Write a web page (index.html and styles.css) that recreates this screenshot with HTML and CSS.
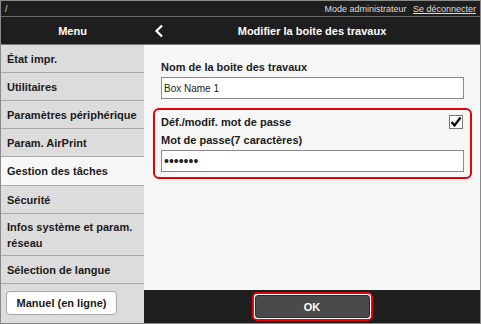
FILE: index.html
```html
<!DOCTYPE html>
<html lang="fr">
<head>
  <meta charset="UTF-8" />
  <title>Modifier la boîte des travaux</title>
  <link rel="stylesheet" href="styles.css">
</head>
<body>
  <div class="page">
    <div class="topbar">
      <span class="path">/</span>
      <span class="admin">Mode administrateur <a href="#" class="logout">Se déconnecter</a></span>
    </div>

    <div class="header">
      <div class="header-menu">Menu</div>
      <div class="header-title">
        <span class="back">
          <svg width="10" height="14" viewBox="0 0 10 14"><path d="M8 1.5 L2.5 7 L8 12.5" fill="none" stroke="#fff" stroke-width="2.2"/></svg>
        </span>
        <span>Modifier la boite des travaux</span>
      </div>
    </div>

    <div class="main">
      <!-- Side menu -->
      <div class="sidebar">
        <div class="menu-item">État impr.</div>
        <div class="menu-item">Utilitaires</div>
        <div class="menu-item">Paramètres périphérique</div>
        <div class="menu-item">Param. AirPrint</div>
        <div class="menu-item active">Gestion des tâches</div>
        <div class="menu-item">Sécurité</div>
        <div class="menu-item tall">Infos système et param. réseau</div>
        <div class="menu-item">Sélection de langue</div>
        <div class="manual-wrap">
          <button class="manual-btn">Manuel (en ligne)</button>
        </div>
      </div>

      <!-- Form -->
      <div class="content">
        <div class="form">
          <div class="field">
            <div class="label">Nom de la boite des travaux</div>
            <div class="input">Box Name 1</div>
          </div>
          <div class="password-box">
            <div class="check-row">
              <span class="label">Déf./modif. mot de passe</span>
              <span class="checkbox">
                <svg width="12" height="12" viewBox="0 0 12 12"><path d="M1.5 6 L4.5 9.5 L10.5 1.5" fill="none" stroke="#000" stroke-width="2.2"/></svg>
              </span>
            </div>
            <div class="label">Mot de passe(7 caractères)</div>
            <div class="input dots">•••••••</div>
          </div>
        </div>
        <div class="footer">
          <div class="ok-ring"><button class="ok-btn">OK</button></div>
        </div>
      </div>
    </div>
  </div>
</body>
</html>
```

FILE: styles.css
```css
* {
  margin: 0;
  padding: 0;
  box-sizing: border-box;
}

body {
  font-family: "Liberation Sans", Arial, sans-serif;
  background: #fff;
}

.page {
  width: 481px;
  height: 324px;
  border: 1px solid #8a8a8a;
  display: flex;
  flex-direction: column;
  overflow: hidden;
}

/* Top bar */
.topbar {
  height: 15px;
  background: #1e1e1e;
  color: #ddd;
  font-size: 9px;
  display: flex;
  justify-content: space-between;
  align-items: center;
  padding: 0 4px 0 4px;
}

.logout {
  color: #ddd;
  margin-left: 4px;
}

/* Header */
.header {
  height: 29px;
  background: #1e1e1e;
  border-top: 1px solid #6a6a6a;
  border-bottom: 1px solid #777;
  display: flex;
  color: #fff;
  font-weight: bold;
  font-size: 11px;
}

.header-menu {
  width: 143px;
  display: flex;
  align-items: center;
  justify-content: center;
}

.header-title {
  flex: 1;
  position: relative;
  display: flex;
  align-items: center;
  justify-content: center;
}

.back {
  position: absolute;
  left: 10px;
  top: 7px;
}

/* Main area */
.main {
  flex: 1;
  display: flex;
  min-height: 0;
}

.sidebar {
  width: 143px;
  background: #dcdcdc;
}

.menu-item {
  height: 28px;
  padding: 0 6px;
  display: flex;
  align-items: center;
  font-size: 11px;
  font-weight: bold;
  color: #1a1a1a;
  border-bottom: 1px solid #a9a9a9;
}

.menu-item.active {
  background: #f7f7f7;
  margin-right: -1px;
  height: 29px;
}

.menu-item.tall {
  height: 42px;
  line-height: 16px;
}

.manual-wrap {
  padding: 7px 5px;
}

.manual-btn {
  width: 111px;
  height: 24px;
  background: #fff;
  border: 1px solid #a8a8a8;
  border-radius: 4px;
  font-family: inherit;
  font-weight: bold;
  font-size: 11px;
  color: #1a1a1a;
}

/* Content */
.content {
  flex: 1;
  background: #f7f7f7;
  display: flex;
  flex-direction: column;
}

.form {
  flex: 1;
  padding: 16px 8px 0 9px;
}

.field {
  padding: 0 8px;
}

.label {
  font-size: 11px;
  font-weight: bold;
  color: #1a1a1a;
  margin-bottom: 4px;
}

.input {
  height: 22px;
  background: #fff;
  border: 1px solid #8a8a8a;
  font-size: 10px;
  color: #222;
  padding: 0 2px;
  display: flex;
  align-items: center;
}

.input.dots {
  font-size: 14px;
}

.password-box {
  margin-top: 9px;
  border: 2px solid #e8000b;
  border-radius: 6px;
  padding: 3px 6px 5px 6px;
  height: 71px;
}

.check-row {
  display: flex;
  justify-content: space-between;
  align-items: center;
  height: 17px;
  margin-bottom: 4px;
}

.check-row .label {
  margin-bottom: 0;
}

.checkbox {
  width: 14px;
  height: 14px;
  border: 1px solid #777;
  background: #fff;
  display: flex;
  align-items: center;
  justify-content: center;
  margin-right: 1px;
}

/* Footer */
.footer {
  height: 33px;
  background: #1e1e1e;
  display: flex;
  justify-content: center;
  align-items: center;
}

.ok-ring {
  border: 2px solid #e8000b;
  border-radius: 5px;
  padding: 1px;
  background: #fff;
}

.ok-btn {
  width: 115px;
  height: 23px;
  background: #4a4a4a;
  border: 1px solid #2a2a2a;
  border-radius: 3px;
  color: #fff;
  font-family: inherit;
  font-weight: bold;
  font-size: 11px;
}
```
